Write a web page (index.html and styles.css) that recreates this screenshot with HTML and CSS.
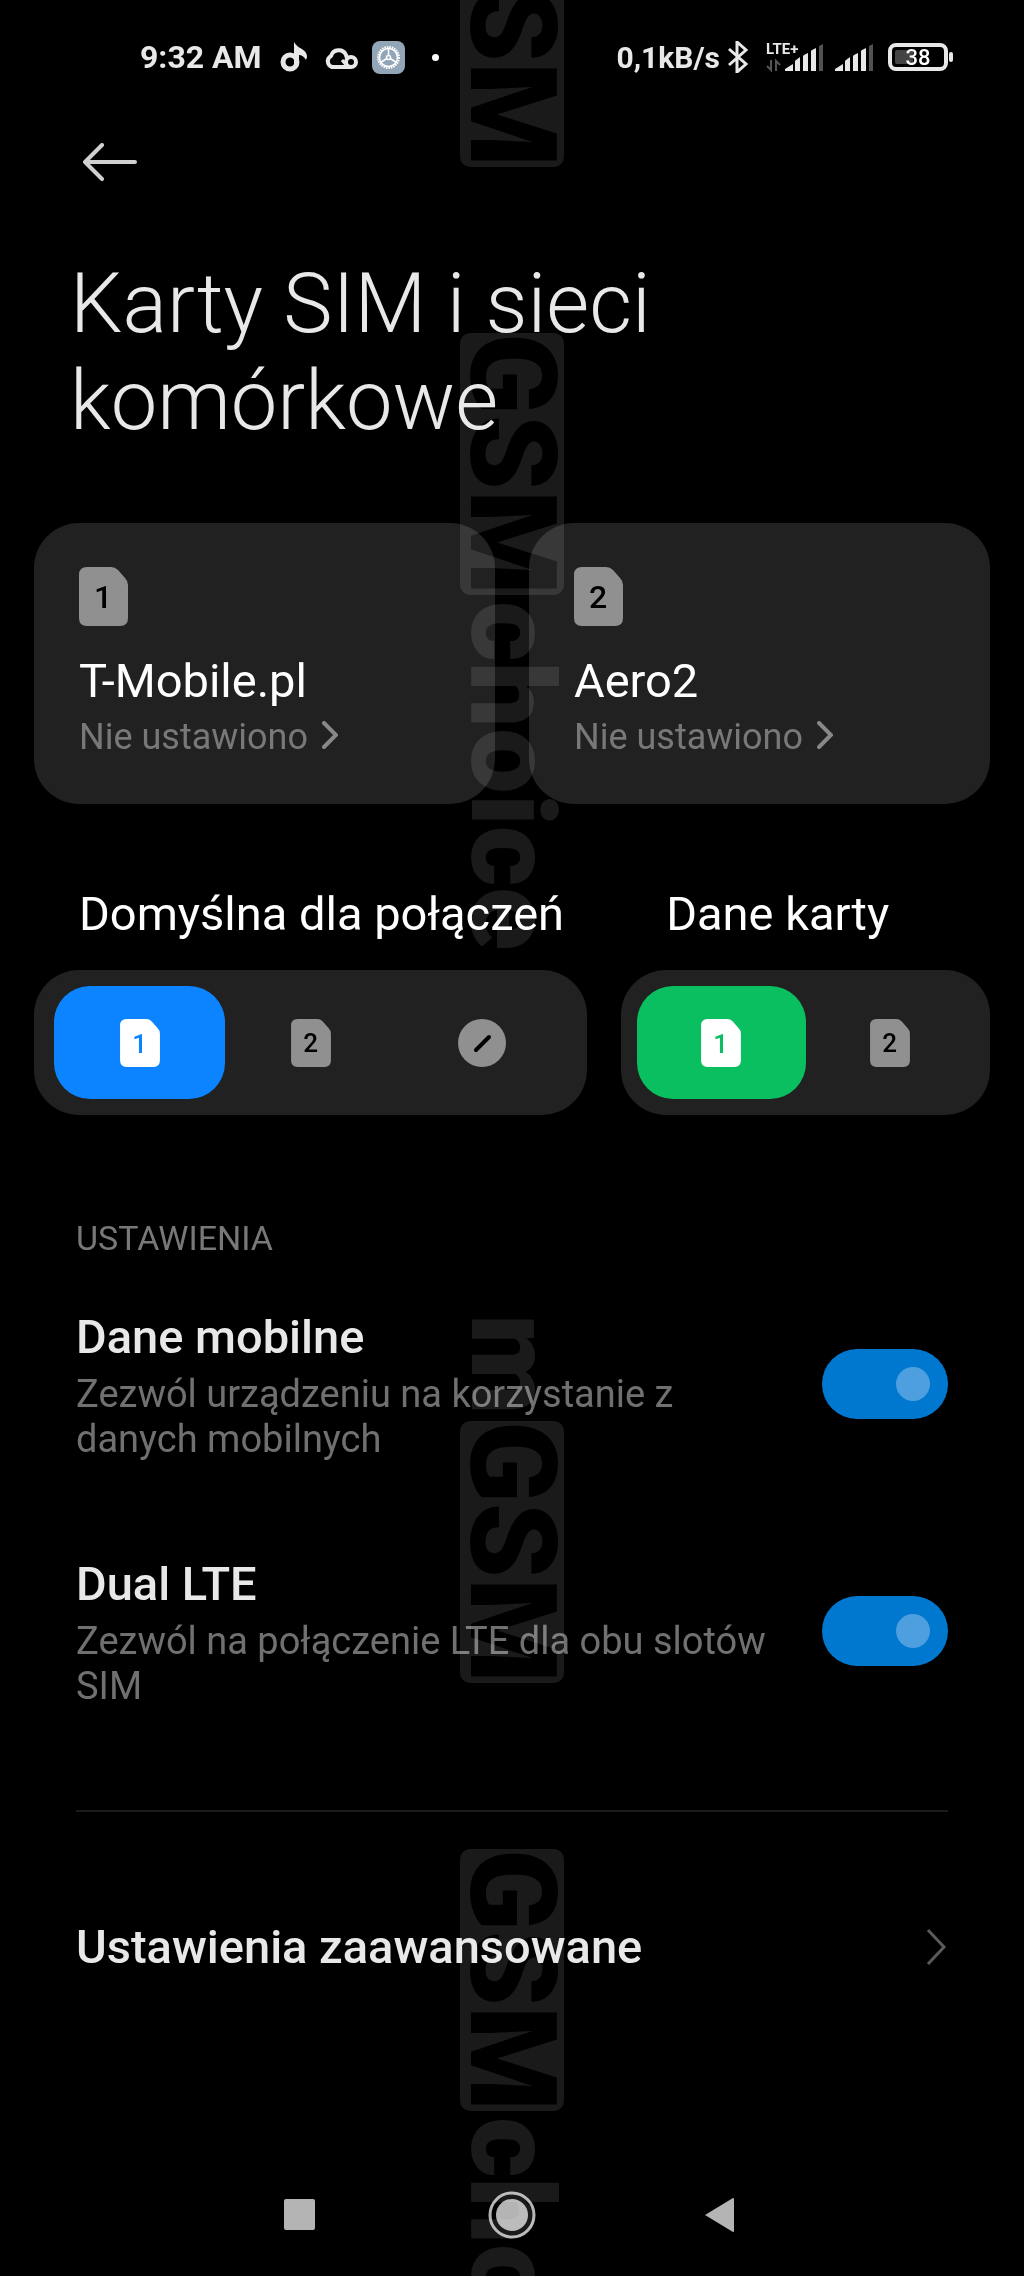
FILE: index.html
```
<!DOCTYPE html>
<html lang="pl">

<head>
    <meta charset="UTF-8">
    <meta name="viewport" content="width=device-width, initial-scale=1.0">
    <title>Karty SIM i sieci komórkowe</title>
    <link rel="stylesheet" href="styles.css">
</head>

<body>
    <svg width="0" height="0" class="defs" aria-hidden="true">
        <symbol id="sim" viewBox="0 0 49 59">
            <path d="M8 0h24q4 0 7 3l7 8q3 3 3 7v33q0 8-8 8H8q-8 0-8-8V8q0-8 8-8z" />
        </symbol>
        <symbol id="signal" viewBox="0 0 38 27">
            <path d="M0 27v-2l8-5v7z" />
            <path d="M10 27V17l1-1 4-3v14z" />
            <path d="M18 27V12l1-1 4-2v18z" />
            <path d="M26 27V7l1-1 4-2v23z" />
            <path d="M34 27V2l4-2v27z" opacity=".35" />
        </symbol>
    </svg>

    <div class="screen">
        <div class="status-bar">
            <div class="status-left">
                <span class="status-text">9:32 AM</span>
                <svg class="note" viewBox="0 0 28 30" width="28" height="30">
                    <circle cx="10" cy="20" r="7" fill="none" stroke="currentColor" stroke-width="5" />
                    <path d="M14 0q3 5 8 7 5 3 5 8l-1 3q-3-5-7-5v10h-5z" fill="currentColor" />
                </svg>
                <svg class="cloud" viewBox="0 0 34 23" width="34" height="23" fill="none" stroke="currentColor" stroke-width="4">
                    <path d="M27 21H8a6 6 0 0 1-1-11 8 8 0 0 1 15-1l1 3" />
                    <circle cx="27" cy="16" r="5" />
                    <path d="M18 14l5 6" stroke-width="3" />
                </svg>
                <svg class="gear" viewBox="0 0 33 33" width="33" height="33">
                    <rect width="33" height="33" rx="8" fill="#93a6b8" />
                    <g fill="none" stroke="#fff">
                        <circle cx="16.500" cy="16.500" r="10.500" stroke-width="2" stroke-dasharray="1.500 1" />
                        <circle cx="16.500" cy="16.500" r="9" stroke-width="1.500" />
                        <circle cx="16.500" cy="16.500" r="2" stroke-width="1.500" />
                        <path d="M16.500 7v7.500M14.800 17.500L8.500 21.500M18.200 17.500l6.300 4" stroke-width="1.500" />
                    </g>
                </svg>
                <span class="dot"></span>
            </div>
            <div class="status-right">
                <span class="status-text speed">0,1kB/s</span>
                <svg class="bluetooth" viewBox="0 0 20 32" width="20" height="32" fill="none" stroke="currentColor" stroke-width="3">
                    <path d="M1 8l17 15-9 8V1l9 8L1 24" />
                </svg>
                <svg class="lte" viewBox="0 0 57 30" width="57" height="30" fill="currentColor">
                    <text x="0" y="12" class="lte-text">LTE+</text>
                    <path d="M5 18v10l-4-4M10 29V19l4 4" fill="none" stroke="#555" stroke-width="2" />
                    <use href="#signal" x="19" y="2" width="38" height="27" />
                </svg>
                <svg viewBox="0 0 38 30" width="38" height="30" fill="currentColor">
                    <use href="#signal" x="0" y="2" width="38" height="27" />
                </svg>
                <svg class="battery" viewBox="0 0 65 28" width="65" height="28">
                    <rect x="2" y="2" width="56" height="24" rx="6" fill="none" stroke="currentColor" stroke-width="4" />
                    <rect x="7" y="7" width="18" height="14" rx="2" fill="#444" />
                    <rect x="61" y="9" width="4" height="10" rx="2" fill="currentColor" />
                    <text x="30" y="22" class="battery-text">38</text>
                </svg>
            </div>
        </div>

        <header class="header">
            <button class="back" aria-label="Wstecz">
                <svg viewBox="0 0 56 38" width="56" height="38" fill="none" stroke="currentColor" stroke-width="4" stroke-linecap="round" stroke-linejoin="round">
                    <path d="M52 19H2M19 2L2 19l17 17" />
                </svg>
            </button>
            <h1>Karty SIM i sieci komórkowe</h1>
        </header>

        <div class="cards">
            <a class="card" href="#sim1">
                <svg class="sim-big" viewBox="0 0 49 59">
                    <use href="#sim" />
                    <text x="24" y="41">1</text>
                </svg>
                <span class="card-name">T-Mobile.pl</span>
                <span class="card-status">Nie ustawiono
                    <svg viewBox="0 0 16 28" width="16" height="28"><path d="M2 2l12 12L2 26" /></svg>
                </span>
            </a>
            <a class="card" href="#sim2">
                <svg class="sim-big" viewBox="0 0 49 59">
                    <use href="#sim" />
                    <text x="24" y="41">2</text>
                </svg>
                <span class="card-name">Aero2</span>
                <span class="card-status">Nie ustawiono
                    <svg viewBox="0 0 16 28" width="16" height="28"><path d="M2 2l12 12L2 26" /></svg>
                </span>
            </a>
        </div>

        <div class="pickers">
            <fieldset class="picker calls">
                <legend>Domyślna dla połączeń</legend>
                <div class="options">
                    <label class="option">
                        <input type="radio" name="calls" aria-label="SIM 1" checked>
                        <svg viewBox="0 0 49 59"><use href="#sim" /><text x="24" y="42">1</text></svg>
                    </label>
                    <label class="option">
                        <input type="radio" name="calls" aria-label="SIM 2">
                        <svg viewBox="0 0 49 59"><use href="#sim" /><text x="24" y="41">2</text></svg>
                    </label>
                    <label class="option">
                        <input type="radio" name="calls" aria-label="Brak">
                        <svg class="none" viewBox="0 0 48 48">
                            <circle cx="24" cy="24" r="24" />
                            <path d="M18 31l13-13" stroke="#000" stroke-width="4" stroke-linecap="round" />
                        </svg>
                    </label>
                </div>
            </fieldset>
            <fieldset class="picker data">
                <legend>Dane karty</legend>
                <div class="options">
                    <label class="option">
                        <input type="radio" name="data" aria-label="SIM 1" checked>
                        <svg viewBox="0 0 49 59"><use href="#sim" /><text x="24" y="42">1</text></svg>
                    </label>
                    <label class="option">
                        <input type="radio" name="data" aria-label="SIM 2">
                        <svg viewBox="0 0 49 59"><use href="#sim" /><text x="24" y="41">2</text></svg>
                    </label>
                </div>
            </fieldset>
        </div>

        <section class="settings">
            <h2>USTAWIENIA</h2>
            <div class="row">
                <label for="mobile-data">
                    <span class="row-title">Dane mobilne</span>
                    <span class="row-desc">Zezwól urządzeniu na korzystanie z danych mobilnych</span>
                </label>
                <input class="switch" type="checkbox" id="mobile-data" checked>
            </div>
            <div class="row">
                <label for="dual-lte">
                    <span class="row-title">Dual LTE</span>
                    <span class="row-desc">Zezwól na połączenie LTE dla obu slotów SIM</span>
                </label>
                <input class="switch" type="checkbox" id="dual-lte" checked>
            </div>
            <a class="advanced" href="#advanced">
                <span class="row-title">Ustawienia zaawansowane</span>
                <svg viewBox="0 0 22 36" width="22" height="36"><path d="M2 1l16 17L2 35" /></svg>
            </a>
        </section>

        <nav class="nav-bar">
            <button aria-label="Ostatnie">
                <svg viewBox="0 0 48 48"><rect x="8" y="8" width="31" height="31" rx="2" /></svg>
            </button>
            <button aria-label="Ekran główny">
                <svg viewBox="0 0 48 48">
                    <circle cx="24" cy="24" r="22" fill="#000" stroke="currentColor" stroke-width="3" />
                    <circle cx="24" cy="24" r="16" />
                </svg>
            </button>
            <button aria-label="Wstecz">
                <svg viewBox="0 0 48 48"><path d="M5 24L33 7q1 0 1 1v32q0 1-1 1z" /></svg>
            </button>
        </nav>

        <div class="watermark" aria-hidden="true">
            <p class="mark mark-1"><b>GSM</b></p>
            <p class="mark mark-2"><b>GSM</b><span>choice</span></p>
            <p class="mark mark-3"><span>m</span><b>GSM</b></p>
            <p class="mark mark-4"><b>GSM</b><span>choice</span></p>
        </div>
    </div>
</body>

</html>
```

FILE: styles.css
```
* {
    box-sizing: border-box;
}

body {
    margin: 0;
    background-color: #000;
    color: #e8e8e8;
    font-family: Roboto, "Noto Sans", sans-serif;
}

a {
    color: inherit;
    text-decoration: none;
}

button {
    padding: 0;
    border: 0;
    background: none;
    color: inherit;
}

svg {
    display: block;
    flex: none;
}

.defs {
    position: absolute;
}

.screen {
    position: relative;
    display: flex;
    flex-direction: column;
    min-height: 100vh;
    overflow: hidden;
}

/* status bar */
.status-bar {
    display: flex;
    justify-content: space-between;
    align-items: center;
    height: 114px;
    padding: 0 71px 0 140px;
}

.status-left,
.status-right {
    display: flex;
    align-items: center;
}

.status-text {
    font-size: 32px;
    font-weight: 700;
}

.speed {
    font-size: 30px;
}

.note {
    margin-left: 18px;
}

.cloud {
    margin-left: 16px;
}

.gear {
    margin-left: 14px;
}

.dot {
    width: 7px;
    height: 7px;
    margin-left: 27px;
    border-radius: 50%;
    background-color: #fff;
}

.bluetooth {
    margin: 0 18px 0 8px;
}

.lte {
    margin-right: 12px;
}

.lte-text {
    font-size: 15px;
    font-weight: 700;
}

.battery {
    margin-left: 15px;
}

.battery-text {
    font-size: 22px;
    font-weight: 500;
    text-anchor: middle;
    fill: #fff;
}

/* header */
.header {
    padding: 0 70px;
}

.back {
    display: flex;
    align-items: center;
    height: 95px;
    padding: 0 13px;
    color: #d0d0d0;
}

h1 {
    max-width: 640px;
    margin: 46px 0 0;
    font-size: 83px;
    font-weight: 300;
    line-height: 97px;
}

/* SIM cards */
.cards {
    display: grid;
    grid-template-columns: 1fr 1fr;
    gap: 34px;
    margin-top: 74px;
    padding: 0 34px;
}

.card {
    padding: 44px 45px 45px;
    border-radius: 45px;
    background-color: #212121;
}

.sim-big {
    width: 49px;
    height: 59px;
    fill: #909090;
}

.sim-big text,
.option text {
    font-size: 32px;
    font-weight: 500;
    text-anchor: middle;
    fill: #000;
}

.card-name {
    display: block;
    margin-top: 27px;
    color: #fff;
    font-size: 47px;
    line-height: 56px;
}

.card-status {
    display: flex;
    align-items: center;
    gap: 14px;
    margin-top: 6px;
    color: #787878;
    font-size: 36px;
    line-height: 44px;
}

.card-status svg {
    margin-bottom: 4px;
    fill: none;
    stroke: #888;
    stroke-width: 4;
    stroke-linecap: round;
}

/* default SIM pickers */
.pickers {
    display: grid;
    grid-template-columns: 3fr 2fr;
    gap: 34px;
    margin-top: 82px;
    padding: 0 34px;
}

.picker {
    min-width: 0;
    margin: 0;
    padding: 0;
    border: 0;
}

legend {
    padding: 0 45px;
    color: #fff;
    font-size: 47px;
    line-height: 56px;
    white-space: nowrap;
}

.options {
    display: flex;
    margin-top: 28px;
    padding: 16px;
    border-radius: 45px;
    background-color: #212121;
}

.calls .options {
    padding: 16px 20px;
}

.option {
    display: flex;
    flex: 1;
    justify-content: center;
    align-items: center;
    height: 113px;
    border-radius: 36px;
}

.option input {
    position: absolute;
    opacity: 0;
}

.option svg {
    width: 40px;
    height: 48px;
    fill: #909090;
}

.option .none {
    width: 48px;
}

.option:has(:checked) svg {
    fill: #fff;
}

.calls .option:has(:checked) {
    background-color: #0d84ff;
}

.calls :checked + svg text {
    fill: #0d84ff;
}

.data .option:has(:checked) {
    background-color: #0abf5f;
}

.data :checked + svg text {
    fill: #0abf5f;
}

/* settings list */
.settings {
    margin-top: 101px;
    padding: 0 76px;
}

h2 {
    margin: 0 0 2px;
    color: #787878;
    font-size: 34px;
    font-weight: 400;
    line-height: 44px;
}

.row {
    display: flex;
    justify-content: space-between;
    align-items: center;
    padding: 47px 0;
}

.row label {
    max-width: 710px;
}

.row-title,
.row-desc {
    display: block;
}

.row-title {
    font-size: 47px;
    font-weight: 500;
    line-height: 56px;
}

.row-desc {
    margin-top: 7px;
    color: #707070;
    font-size: 38px;
    line-height: 45px;
}

.switch {
    flex: none;
    width: 126px;
    height: 70px;
    margin: 0 0 4px;
    padding: 18px;
    border-radius: 35px;
    background-color: #444;
    appearance: none;
}

.switch::before {
    content: "";
    display: block;
    width: 34px;
    height: 34px;
    border-radius: 50%;
    background-color: #4d9fdf;
}

.switch:checked {
    background-color: #0078d0;
}

.switch:checked::before {
    margin-left: auto;
}

.advanced {
    display: flex;
    justify-content: space-between;
    align-items: center;
    margin-top: 54px;
    padding: 107px 0;
    border-top: 2px solid #1c1c1c;
}

.advanced svg {
    fill: none;
    stroke: #5a5a5a;
    stroke-width: 3;
}

/* navigation bar */
.nav-bar {
    display: flex;
    justify-content: space-between;
    width: 46%;
    margin: auto auto 37px;
}

.nav-bar button {
    color: #b4b4b4;
}

.nav-bar svg {
    width: 48px;
    height: 48px;
    fill: currentColor;
}

/* watermark, black letters drop out of the light tiles */
.watermark {
    position: absolute;
    inset: 0;
    overflow: hidden;
    mix-blend-mode: screen;
    pointer-events: none;
}

.mark {
    position: absolute;
    left: calc(50% - 52px);
    display: flex;
    gap: 6px;
    margin: 0;
    color: #1a1a1a;
    font-size: 120px;
    font-weight: 700;
    line-height: 104px;
    white-space: nowrap;
    writing-mode: vertical-rl;
}

.mark b {
    border-radius: 10px;
    background-color: #1a1a1a;
    color: #000;
}

.mark span {
    font-size: 117px;
    font-weight: 900;
}

.mark-1 {
    top: -95px;
}

.mark-2 {
    top: 333px;
}

.mark-3 {
    top: 1314px;
}

.mark-4 {
    top: 1849px;
}
```
